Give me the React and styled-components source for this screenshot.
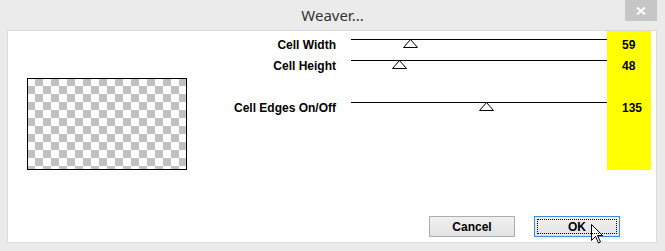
import React from 'react';
import styled, { createGlobalStyle } from 'styled-components';

const GlobalStyle = createGlobalStyle`
  html, body {
    margin: 0;
    padding: 0;
    background: #e9e9e9;
  }
  * {
    box-sizing: border-box;
  }
`;

const Window = styled.div`
  width: 665px;
  height: 251px;
  display: flex;
  flex-direction: column;
  background: #ebebeb;
  font-family: "Liberation Sans", Arial, sans-serif;
`;

const TitleBar = styled.div`
  height: 30px;
  display: grid;
  grid-template-columns: 1fr auto 1fr;
  align-items: start;
`;

const Title = styled.div`
  grid-column: 2;
  margin-top: 5px;
  font-family: "Noto Sans", "Open Sans", sans-serif;
  font-size: 15px;
  line-height: 20px;
  color: #333;
`;

const CloseButton = styled.div`
  grid-column: 3;
  justify-self: end;
  margin-right: 8px;
  width: 32px;
  height: 21px;
  background: #c6c6c6;
  display: flex;
  align-items: center;
  justify-content: center;
`;

const Content = styled.div`
  flex: 1;
  margin: 0 8px 8px 7px;
  background: #fff;
  border: 1px solid #dcdcdc;
  display: flex;
  flex-direction: column;
`;

const TopSection = styled.div`
  display: flex;
`;

const PreviewColumn = styled.div`
  width: 199px;
  padding: 47px 0 0 19px;
`;

const Checker = styled.div`
  width: 160px;
  height: 92px;
  border: 1px solid #000;
  background: repeating-conic-gradient(#c2c2c2 0 25%, #fff 0 50%) -1px -1px / 16px 16px;
`;

const Controls = styled.div`
  flex: 1;
  display: flex;
  margin-right: 5px;
`;

const LabelColumn = styled.div`
  flex: 1;
  padding-right: 15px;
  text-align: right;
`;

const TrackColumn = styled.div`
  width: 256px;
`;

const ValueColumn = styled.div`
  width: 44px;
  background: #ffff00;
  padding: 0 0 7px 15px;
`;

const Row = styled.div`
  height: 21px;
  margin-top: ${p => (p.$spaced ? '21px' : '0')};
`;

const LabelText = styled(Row)`
  padding-top: 7px;
  font-size: 12px;
  line-height: 14px;
  font-weight: bold;
  color: #000;
  white-space: nowrap;
`;

const Track = styled(Row)`
  position: relative;
  &::before {
    content: '';
    position: absolute;
    left: 0;
    right: 0;
    top: 8px;
    height: 1px;
    background: #000;
  }
`;

const Thumb = styled.svg`
  position: absolute;
  top: 8px;
  width: 15px;
  height: 9px;
  margin-left: -7px;
`;

const ButtonRow = styled.div`
  margin-top: auto;
  display: flex;
  justify-content: flex-end;
  gap: 19px;
  padding: 0 36px 5px 0;
`;

const Button = styled.div`
  position: relative;
  width: 86px;
  height: 21px;
  display: flex;
  align-items: center;
  justify-content: center;
  font-size: 12px;
  font-weight: bold;
  color: #000;
  background: linear-gradient(#f0f0f0, #e3e3e3);
  border: 1px solid ${p => (p.$focused ? '#3c8ad8' : '#adadad')};
  &::after {
    content: '';
    display: ${p => (p.$focused ? 'block' : 'none')};
    position: absolute;
    inset: 2px;
    border: 1px dotted #000;
  }
`;

const Cursor = styled.svg`
  position: absolute;
  left: 56px;
  top: 7px;
  width: 13px;
  height: 20px;
`;

const sliders = [
  { label: 'Cell Width', value: 59 },
  { label: 'Cell Height', value: 48 },
  { label: 'Cell Edges On/Off', value: 135, spaced: true },
];

function App() {
  return (
    <>
      <GlobalStyle />
      <Window>
        <TitleBar>
          <Title>Weaver...</Title>
          <CloseButton>
            <svg width="10" height="8" viewBox="0 0 10 8">
              <path d="M1 0.5 L9 7.5 M9 0.5 L1 7.5" stroke="#fff" strokeWidth="2" />
            </svg>
          </CloseButton>
        </TitleBar>
        <Content>
          <TopSection>
            <PreviewColumn>
              <Checker />
            </PreviewColumn>
            <Controls>
              <LabelColumn>
                {sliders.map(s => (
                  <LabelText key={s.label} $spaced={s.spaced}>{s.label}</LabelText>
                ))}
              </LabelColumn>
              <TrackColumn>
                {sliders.map(s => (
                  <Track key={s.label} $spaced={s.spaced}>
                    <Thumb viewBox="0 0 15 9" style={{ left: s.value }}>
                      <polygon points="7.5,0.5 14.5,8.5 0.5,8.5" fill="#fff" stroke="#000" strokeWidth="1" />
                    </Thumb>
                  </Track>
                ))}
              </TrackColumn>
              <ValueColumn>
                {sliders.map(s => (
                  <LabelText key={s.label} $spaced={s.spaced} style={{ textAlign: 'left' }}>{s.value}</LabelText>
                ))}
              </ValueColumn>
            </Controls>
          </TopSection>
          <ButtonRow>
            <Button>Cancel</Button>
            <Button $focused>
              OK
              <Cursor viewBox="0 0 13 20">
                <path d="M0.5 0.5 L0.5 16.5 L4.5 12.5 L7.5 19 L9.5 18 L6.5 11.5 L11.5 11.5 Z" fill="#fff" stroke="#000" strokeWidth="1" />
              </Cursor>
            </Button>
          </ButtonRow>
        </Content>
      </Window>
    </>
  );
}

export default App;
